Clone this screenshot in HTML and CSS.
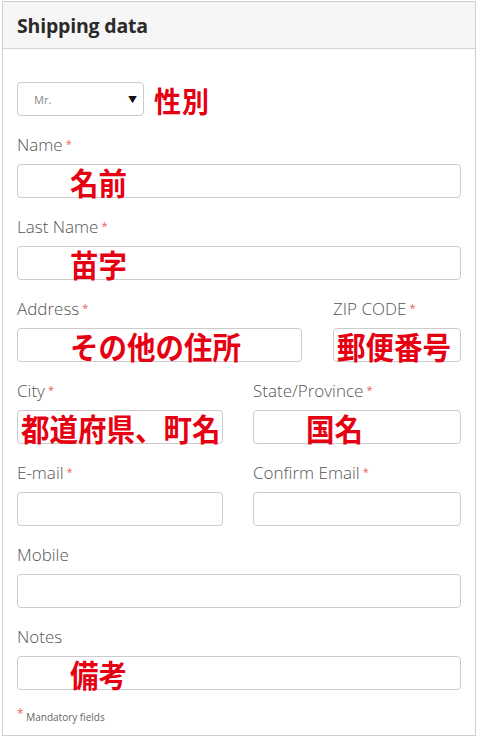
FILE: index.html
```html
<!DOCTYPE html>
<html lang="en">
<head>
<meta charset="utf-8">
<title>Shipping data</title>
<link rel="stylesheet" href="styles.css">
</head>
<body>
<div class="panel">
  <div class="panel-head"><h2>Shipping data</h2></div>
  <div class="panel-body">
    <div class="gender">
      <div class="select"><span class="select-val">Mr.</span><span class="caret">&#9660;</span></div>
      <span class="note note-gender">性別</span>
    </div>

    <div class="field">
      <div class="label">Name<span class="req">*</span></div>
      <div class="box"><span class="note ind">名前</span></div>
    </div>

    <div class="field">
      <div class="label">Last Name<span class="req">*</span></div>
      <div class="box"><span class="note ind">苗字</span></div>
    </div>

    <div class="row row-addr">
      <div class="field">
        <div class="label">Address<span class="req">*</span></div>
        <div class="box"><span class="note ind">その他の住所</span></div>
      </div>
      <div class="field">
        <div class="label">ZIP CODE<span class="req">*</span></div>
        <div class="box"><span class="note tight">郵便番号</span></div>
      </div>
    </div>

    <div class="row row-half">
      <div class="field">
        <div class="label">City<span class="req">*</span></div>
        <div class="box"><span class="note tight">都道府県、町名</span></div>
      </div>
      <div class="field">
        <div class="label">State/Province<span class="req">*</span></div>
        <div class="box"><span class="note ind">国名</span></div>
      </div>
    </div>

    <div class="row row-half">
      <div class="field">
        <div class="label">E-mail<span class="req">*</span></div>
        <div class="box"></div>
      </div>
      <div class="field">
        <div class="label">Confirm Email<span class="req">*</span></div>
        <div class="box"></div>
      </div>
    </div>

    <div class="field">
      <div class="label">Mobile</div>
      <div class="box"></div>
    </div>

    <div class="field">
      <div class="label">Notes</div>
      <div class="box"><span class="note ind">備考</span></div>
    </div>

    <div class="mandatory"><span class="req">*</span> Mandatory fields</div>
  </div>
</div>
</body>
</html>
```
FILE: styles.css
```css
html, body {
  margin: 0;
  padding: 0;
  background: #fff;
}
body {
  font-family: "Open Sans", "Noto Sans CJK JP", sans-serif;
  color: #555;
}
.panel {
  margin: 1px 0 0 2px;
  width: 474px;
  box-sizing: border-box;
  border: 1px solid #cfcfcf;
}
.panel-head {
  height: 46px;
  background: #f6f6f6;
  border-bottom: 1px solid #d4d4d4;
  display: flex;
  align-items: center;
  padding-left: 14px;
}
.panel-head h2 {
  margin: 0;
  font-size: 19.5px;
  font-weight: 700;
  letter-spacing: -0.2px;
  color: #2a2a2a;
}
.panel-body {
  padding: 33px 14px 11px 14px;
}
.gender {
  display: flex;
  align-items: center;
  gap: 10px;
  margin-bottom: 15px;
}
.select {
  width: 127px;
  height: 34px;
  box-sizing: border-box;
  border: 1px solid #cccccc;
  border-radius: 4px;
  display: flex;
  align-items: center;
  justify-content: space-between;
  padding: 0 6px 0 16px;
}
.select-val {
  font-size: 11px;
  color: #888;
}
.caret {
  font-size: 9px;
  color: #111;
}
.note {
  font-family: "Noto Sans CJK JP", sans-serif;
  font-weight: 700;
  font-size: 28.5px;
  line-height: 1;
  color: #e60012;
  white-space: nowrap;
  display: inline-block;
  transform: scaleY(1.08);
  position: relative;
  top: 1px;
}
.note-gender {
  font-size: 27px;
  letter-spacing: 1px;
}
.field {
  margin-bottom: 15px;
}
.label {
  font-size: 17px;
  font-weight: 300;
  line-height: 24px;
  height: 24px;
  padding-top: 2px;
  margin-bottom: 7px;
  color: #555;
  white-space: nowrap;
}
.req {
  color: #e86060;
  font-size: 11px;
  font-weight: 400;
  margin-left: 3px;
  vertical-align: 3px;
  line-height: 0;
}
.box {
  height: 34px;
  box-sizing: border-box;
  border: 1px solid #cccccc;
  border-radius: 4px;
  display: flex;
  align-items: center;
}
.ind {
  margin-left: 52px;
}
.tight {
  margin-left: 3px;
}
.row {
  display: grid;
}
.row-addr {
  grid-template-columns: 285px 1fr;
  column-gap: 31px;
}
.row-half {
  grid-template-columns: 206px 1fr;
  column-gap: 30px;
}
.mandatory {
  font-size: 10px;
  line-height: 14px;
  height: 14px;
  color: #666;
  margin-top: 20px;
}
.mandatory .req {
  margin-left: 0;
  font-size: 12px;
}
```
